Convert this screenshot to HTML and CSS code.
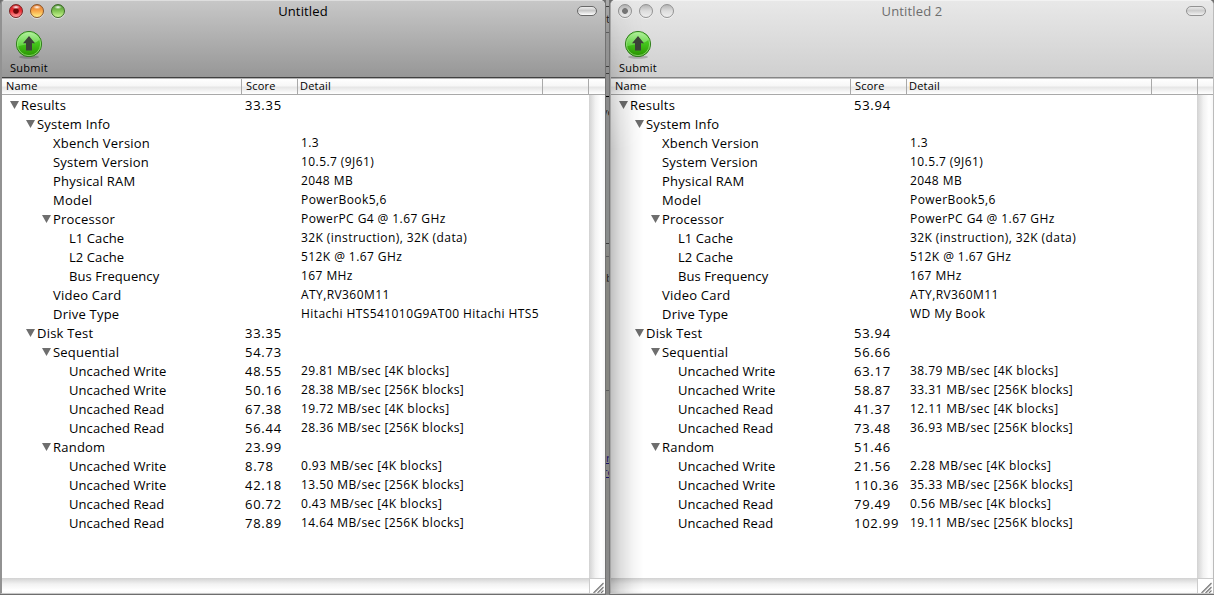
FILE: index.html
```
<!DOCTYPE html>
<html lang="en">
<head>
    <meta charset="UTF-8">
    <title>Xbench Results</title>
    <link rel="stylesheet" href="styles.css">
</head>
<body>
    <svg class="defs" width="0" height="0">
        <defs>
            <linearGradient id="green" x1="0" y1="0" x2="0" y2="1">
                <stop offset="0" stop-color="#5fd43f"/>
                <stop offset="0.5" stop-color="#43c41b"/>
                <stop offset="1" stop-color="#2a9300"/>
            </linearGradient>
            <linearGradient id="shine" x1="0" y1="0" x2="0" y2="1">
                <stop offset="0" stop-color="#c4f5b4"/>
                <stop offset="1" stop-color="#66d945"/>
            </linearGradient>
            <symbol id="submit" viewBox="0 0 28 30">
                <ellipse cx="14" cy="27" rx="10" ry="1.8" fill="#000" opacity="0.2"/>
                <circle cx="14" cy="14" r="12.6" fill="url(#green)" stroke="#23720e" stroke-width="0.9"/>
                <path d="M2.6 16.5A11.6 11.6 0 0 1 24.6 9.5C21 14.5 12 13.5 2.6 16.5Z" fill="url(#shine)" opacity="0.8"/>
                <circle cx="14" cy="14" r="11.7" fill="none" stroke="#b5f29c" stroke-width="0.8" opacity="0.8"/>
                <path d="M14 6L20 13.3H17V20.5H11V13.3H8Z" fill="#3c4238"/>
            </symbol>
            <symbol id="grip" viewBox="0 0 14 15">
                <path d="M3.5 14L13.5 4M7.5 14L13.5 8M11 14L13.5 11.5" fill="none" stroke="#777" stroke-width="1.1"/>
                <path d="M5 14L13.5 5.5M9 14L13.5 9.5" fill="none" stroke="#ccc" stroke-width="0.8"/>
            </symbol>
        </defs>
    </svg>

    <div class="desktop">
        <div class="window active">
            <div class="toolbar">
                <div class="titlebar">
                    <span class="light red"></span><span class="light yellow"></span><span class="light lime"></span>
                    <h1>Untitled</h1>
                    <span class="pill"></span>
                </div>
                <div class="submit">
                    <svg width="28" height="30"><use href="#submit"/></svg>
                    <span>Submit</span>
                </div>
            </div>
            <div class="header"><span>Name</span><span>Score</span><span>Detail</span><span></span><span></span></div>
            <div class="content">
                <div class="tree" id="left"></div>
                <div class="vscroll"></div>
            </div>
            <div class="footer">
                <div class="hscroll"></div>
                <div class="grip"><svg width="14" height="15"><use href="#grip"/></svg></div>
            </div>
        </div>

        <div class="behind">
            <i class="dark l1"></i><i class="l2"></i><i class="dark l3"></i><i class="dark l4"></i><i class="black l5"></i>
            <i class="dark l6"></i><i class="l7"></i><i class="l8"></i>
            <b class="t1">t</b><b class="t2">ve</b><b class="t3">b</b><b class="link t4">r</b><b class="link t5">re</b>
        </div>

        <div class="window inactive">
            <div class="toolbar">
                <div class="titlebar">
                    <span class="light dot"></span><span class="light"></span><span class="light"></span>
                    <h1>Untitled 2</h1>
                    <span class="pill"></span>
                </div>
                <div class="submit">
                    <svg width="28" height="30"><use href="#submit"/></svg>
                    <span>Submit</span>
                </div>
            </div>
            <div class="header"><span>Name</span><span>Score</span><span>Detail</span><span></span><span></span></div>
            <div class="content">
                <div class="tree" id="right"></div>
                <div class="vscroll"></div>
            </div>
            <div class="footer">
                <div class="hscroll"></div>
                <div class="grip"><svg width="14" height="15"><use href="#grip"/></svg></div>
            </div>
        </div>
    </div>
    <script src="script.js"></script>
</body>
</html>
```
FILE: styles.css
```
* {
    box-sizing: border-box;
}
body {
    margin: 0;
    overflow: hidden;
    background: #6e6e6e;
    color: #000;
    font-family: "Open Sans", "Noto Sans", sans-serif;
}
.defs {
    position: absolute;
}
.desktop {
    display: flex;
    width: 1214px;
    height: 595px;
}
.window {
    flex: none;
    width: 605px;
    height: 594px;
    display: flex;
    flex-direction: column;
    border-left: 2px solid #929292;
    border-bottom: 1px solid #c8c8c8;
    background: #fff;
    border-radius: 5px 5px 0 0;
    overflow: hidden;
}
.inactive {
    position: relative;
    width: 604px;
    border-left: 1px solid #a5a5a5;
    border-right: 1px solid #bbb;
}
/* shadow thrown by the front window */
.inactive::after {
    content: "";
    position: absolute;
    left: 0;
    top: 0;
    width: 32px;
    height: 100%;
    background: linear-gradient(to right, rgba(0,0,0,0.24), rgba(0,0,0,0.13) 30%, rgba(0,0,0,0.04) 70%, transparent);
    mask-image: linear-gradient(rgba(0,0,0,0.1), #000 150px);
}
.toolbar {
    height: 79px;
    flex: none;
    background: linear-gradient(#c7c7c7, #969696);
    border-bottom: 1px solid #b4b4b4;
    border-top: 1px solid #dedede;
    box-shadow: inset 0 -1px 0 #404040;
}
.inactive .toolbar {
    background: linear-gradient(#e8e8e8, #cfcfcf);
    border-bottom-color: #c0c0c0;
    border-top-color: #f2f2f2;
    box-shadow: inset 0 -1px 0 #858585;
}
.titlebar {
    display: flex;
    align-items: center;
    height: 20px;
    padding: 0 8px 0 7px;
    gap: 7px;
}
.inactive .titlebar {
    padding-right: 7px;
}
.titlebar h1 {
    flex: 1;
    margin: 0;
    padding-right: 36px;
    text-align: center;
    font-size: 13px;
    font-weight: normal;
    letter-spacing: 0.15px;
}
.inactive h1 {
    color: #6d6d6d;
}
.light {
    width: 14px;
    height: 14px;
    border-radius: 50%;
    border: 1px solid #929292;
    background: linear-gradient(#b4b4b4, #ddd 50%, #eee);
    box-shadow: 0 1px 0 rgba(255,255,255,0.5);
}
.dot {
    background: radial-gradient(circle, #777 0 2.5px, transparent 3.3px), linear-gradient(#b4b4b4, #ddd 50%, #eee);
}
.red {
    border-color: #7c2020;
    background: radial-gradient(ellipse 4px 2px at 50% 18%, #fff, transparent), radial-gradient(circle, #6b0808 0 2.3px, transparent 3.3px), linear-gradient(#c81e25, #ee3037 50%, #ffa0a0);
}
.yellow {
    border-color: #8b5527;
    background: radial-gradient(ellipse 4px 2px at 50% 18%, #fff, transparent), linear-gradient(#dc7633, #f9a849 50%, #fff088);
}
.lime {
    border-color: #3c6926;
    background: radial-gradient(ellipse 4px 2px at 50% 18%, #fff, transparent), linear-gradient(#4b8f32, #83c653 50%, #ccf794);
}
.pill {
    width: 20px;
    height: 10px;
    border: 1px solid #696969;
    border-radius: 5px;
    background: linear-gradient(#eee, #c8c8c8 45%, #fff);
}
.inactive .pill {
    border-color: #929292;
    background: linear-gradient(#e8e8e8, #ccc 45%, #f0f0f0);
}
.submit {
    display: flex;
    flex-direction: column;
    align-items: center;
    width: 54px;
    padding-top: 9px;
    font-size: 11px;
    line-height: 15px;
    letter-spacing: 0.25px;
}
.header {
    display: grid;
    grid-template-columns: 240px 56px 245px 46px 1fr;
    flex: none;
    height: 16px;
    border-bottom: 1px solid #a9a9a9;
    background: linear-gradient(#fff 0, #f7f7f7 45%, #e6e6e6 55%, #fff 100%);
    font-size: 11px;
    line-height: 14px;
    letter-spacing: 0.2px;
}
.header span {
    padding-left: 4px;
    border-right: 1px solid #a9a9a9;
}
.header span:nth-child(3) {
    padding-left: 2px;
}
.header span:last-child {
    border: none;
}
.content {
    display: flex;
    flex: 1;
}
.tree {
    flex: 1;
    padding-top: 1px;
}
.row {
    display: grid;
    grid-template-columns: 243px 56px 1fr;
    height: 19px;
    font-size: 13px;
    line-height: 18px;
    white-space: nowrap;
}
.name {
    display: flex;
    padding-left: 19px;
    letter-spacing: 0.22px;
}
.open::before {
    content: "";
    width: 9px;
    height: 8px;
    margin: 5px 2px 0 -11px;
    background: #6e6e6e;
    clip-path: polygon(0 0, 100% 0, 50% 100%);
}
.level1 { padding-left: 35px; }
.level2 { padding-left: 51px; }
.level3 { padding-left: 67px; letter-spacing: 0.08px; }
.score {
    letter-spacing: 0.75px;
}
.detail {
    font-size: 12px;
    line-height: 17px;
    letter-spacing: 0.42px;
}
.vscroll {
    width: 16px;
    background: linear-gradient(to right, #d2d2d2, #f2f2f2 40%, #fff 75%, #f7f7f7);
}
.footer {
    display: flex;
    height: 15px;
    flex: none;
}
.hscroll {
    flex: 1;
    background: linear-gradient(#d2d2d2, #f2f2f2 40%, #fff 80%, #fafafa);
}
.grip {
    width: 16px;
    border-left: 1px solid #ccc;
    border-top: 1px solid #ccc;
    background: #fff;
}
.grip svg {
    display: block;
}

/* sliver of the browser page between the two windows */
.behind {
    position: relative;
    flex: none;
    width: 5px;
    overflow: hidden;
    background: linear-gradient(#aaa 0, #969696 32px, #8b8b8b 96px, #8a8d8c 243px, #868681 256px, #868681 390px, #8b8b8b 595px);
    border: solid #727272;
    border-width: 0 1px;
}
.behind i {
    position: absolute;
    left: 0;
    width: 5px;
    height: 1px;
    background: #5c5c5c;
}
.behind .dark { background: #3d3d3d; }
.behind .black { background: #000; }
.l1 { top: 6px; }
.l2 { top: 32px; }
.l3 { top: 66px; }
.l4 { top: 73px; }
.l5 { top: 96px; }
.l6 { top: 243px; }
.l7 { top: 256px; }
.l8 { top: 390px; }
.behind b {
    position: absolute;
    left: 0;
    font-size: 11px;
    font-weight: normal;
    line-height: 14px;
    color: #222;
}
.t1 { top: 12px; }
.t2 { top: 105px; margin-left: -4px; }
.t3 { top: 271px; }
.t4 { top: 451px; }
.t5 { top: 465px; margin-left: -3px; }
.behind .link {
    color: #1c1466;
    text-decoration: underline;
}
```
FILE: script.js
```
const left = [
    [0, 'Results', '33.35', '', 1],
    [1, 'System Info', '', '', 1],
    [2, 'Xbench Version', '', '1.3'],
    [2, 'System Version', '', '10.5.7 (9J61)'],
    [2, 'Physical RAM', '', '2048 MB'],
    [2, 'Model', '', 'PowerBook5,6'],
    [2, 'Processor', '', 'PowerPC G4 @ 1.67 GHz', 1],
    [3, 'L1 Cache', '', '32K (instruction), 32K (data)'],
    [3, 'L2 Cache', '', '512K @ 1.67 GHz'],
    [3, 'Bus Frequency', '', '167 MHz'],
    [2, 'Video Card', '', 'ATY,RV360M11'],
    [2, 'Drive Type', '', 'Hitachi HTS541010G9AT00 Hitachi HTS5'],
    [1, 'Disk Test', '33.35', '', 1],
    [2, 'Sequential', '54.73', '', 1],
    [3, 'Uncached Write', '48.55', '29.81 MB/sec [4K blocks]'],
    [3, 'Uncached Write', '50.16', '28.38 MB/sec [256K blocks]'],
    [3, 'Uncached Read', '67.38', '19.72 MB/sec [4K blocks]'],
    [3, 'Uncached Read', '56.44', '28.36 MB/sec [256K blocks]'],
    [2, 'Random', '23.99', '', 1],
    [3, 'Uncached Write', '8.78', '0.93 MB/sec [4K blocks]'],
    [3, 'Uncached Write', '42.18', '13.50 MB/sec [256K blocks]'],
    [3, 'Uncached Read', '60.72', '0.43 MB/sec [4K blocks]'],
    [3, 'Uncached Read', '78.89', '14.64 MB/sec [256K blocks]']
];

// same machine, external drive: only the drive and the disk scores differ
const external = {
    0: ['53.94', ''],
    11: ['', 'WD My Book'],
    12: ['53.94', ''],
    13: ['56.66', ''],
    14: ['63.17', '38.79 MB/sec [4K blocks]'],
    15: ['58.87', '33.31 MB/sec [256K blocks]'],
    16: ['41.37', '12.11 MB/sec [4K blocks]'],
    17: ['73.48', '36.93 MB/sec [256K blocks]'],
    18: ['51.46', ''],
    19: ['21.56', '2.28 MB/sec [4K blocks]'],
    20: ['110.36', '35.33 MB/sec [256K blocks]'],
    21: ['79.49', '0.56 MB/sec [4K blocks]'],
    22: ['102.99', '19.11 MB/sec [256K blocks]']
};
const right = left.map((r, i) => external[i] ? [r[0], r[1], ...external[i], r[4]] : r);

function render(id, rows) {
    document.getElementById(id).innerHTML = rows.map(([level, name, score, detail, open]) => `
        <div class="row">
            <span class="name level${level}${open ? ' open' : ''}">${name}</span>
            <span class="score">${score}</span>
            <span class="detail">${detail}</span>
        </div>`).join('');
}

render('left', left);
render('right', right);
```
